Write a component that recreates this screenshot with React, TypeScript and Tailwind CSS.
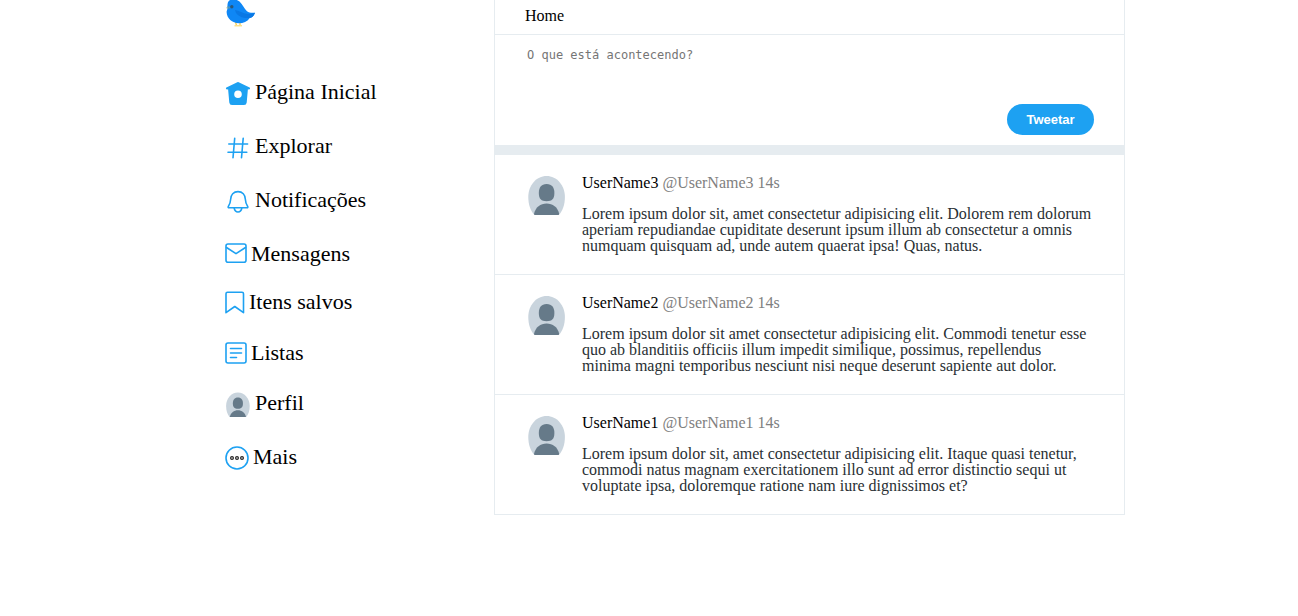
import type { ReactNode } from "react";

const line = {
  fill: "none",
  stroke: "#1da1f2",
  strokeWidth: 1.6,
  strokeLinecap: "round" as const,
  strokeLinejoin: "round" as const,
};

function BirdLogo() {
  return (
    <svg viewBox="0 0 32 28" className="h-7 w-8" aria-hidden="true">
      <path d="M10.500 22 L11.500 25.500 M15 22.500 L15 25.500" stroke="#f6c945" strokeWidth="1.200" fill="none" />
      <path d="M9.500 25.700 H17" stroke="#fbe08a" strokeWidth="1.500" fill="none" />
      <path d="M0.800 8 L3.500 5.500 L4.500 9.500 Z" fill="#d9d6a0" />
      <path
        d="M5 0 C8.500 -1.200 12 -0.500 14.500 1.500 C17.800 4.500 19 8.500 22 11.300 C24 13 27 12.800 30 12.700 C28.800 16 27 17.500 24.800 18 C22 21.800 18.500 23.300 14 23.300 C7 23 1.800 18.500 1.600 12 C1.600 10.500 2.500 9.500 2.600 8 C2.200 4.500 2.500 1.500 5 0 Z"
        fill="#0f87f5"
      />
      <path d="M10 10 C14 10.500 18 13.800 22.500 14 C25 14.100 28 13.500 30 12.700 C28.800 16 27 17.500 24.800 18 C19 18.500 11.500 17 10 10 Z" fill="#0a78e4" />
      <path d="M2.700 5.800 L6 7.500 L3.200 9.300 Z" fill="#4d93b8" />
      <circle cx="6.800" cy="6.800" r="1.700" fill="#2c5878" />
    </svg>
  );
}

function HomeIcon() {
  return (
    <svg viewBox="0 0 26 28" className="h-7 w-[26px] shrink-0" aria-hidden="true">
      <path
        fillRule="evenodd"
        fill="#1da1f2"
        d="M12.300 4.200 Q13 3.800 13.700 4.200 L24.600 9.400 Q25.300 9.900 25 10.800 Q24.600 11.500 23.800 11.400 L22.900 11.300 L21.700 24.500 Q21.400 27 19 27 H7 Q4.600 27 4.300 24.500 L3.100 11.300 L2.200 11.400 Q1.400 11.500 1 10.800 Q0.700 9.900 1.400 9.400 Z M13 12.400 a3.800 3.800 0 1 0 0 7.600 a3.800 3.800 0 1 0 0 -7.600 Z"
      />
    </svg>
  );
}

function HashIcon() {
  return (
    <svg viewBox="0 0 26 28" className="h-7 w-[26px] shrink-0" aria-hidden="true">
      <path {...line} d="M9.700 6.300 L8 25.700 M18.200 6.300 L16.500 25.700 M3.800 12 H22.600 M3 20.300 H21.800" />
    </svg>
  );
}

function BellIcon() {
  return (
    <svg viewBox="0 0 26 28" className="h-7 w-[26px] shrink-0" aria-hidden="true">
      <path {...line} d="M13 5.600 C8.500 5.600 5.900 9 5.700 13 C5.500 17 4.800 18.500 3.200 20.700 Q2.900 21.800 4 21.800 H22 Q23.100 21.800 22.800 20.700 C21.200 18.500 20.500 17 20.300 13 C20.100 9 17.500 5.600 13 5.600 Z" />
      <path {...line} d="M9.200 22.200 C9.600 24.700 11 26 13 26 C15 26 16.400 24.700 16.800 22.200" />
    </svg>
  );
}

function MailIcon() {
  return (
    <svg viewBox="0 0 22 28" className="h-7 w-[22px] shrink-0" aria-hidden="true">
      <rect {...line} x="1" y="4" width="20" height="18.200" rx="2" />
      <path {...line} d="M1.500 7.500 L11 13.700 L20.500 7.500" />
    </svg>
  );
}

function BookmarkIcon() {
  return (
    <svg viewBox="0 0 20 28" className="h-7 w-5 shrink-0" aria-hidden="true">
      <path {...line} d="M2.500 4.300 H17 Q18.500 4.300 18.500 5.800 V24.700 L9.800 18.500 L1 24.700 V5.800 Q1 4.300 2.500 4.300 Z" />
    </svg>
  );
}

function ListIcon() {
  return (
    <svg viewBox="0 0 22 28" className="h-7 w-[22px] shrink-0" aria-hidden="true">
      <rect {...line} x="1" y="4" width="20" height="20" rx="2" />
      <path {...line} d="M5.500 9.500 H16.500 M5.500 14 H16.500 M5.500 18.500 H11.500" />
    </svg>
  );
}

function MoreIcon() {
  return (
    <svg viewBox="0 0 24 28" className="h-7 w-6 shrink-0" aria-hidden="true">
      <circle cx="12" cy="15" r="11" fill="none" stroke="#1da1f2" strokeWidth="1.600" />
      <g fill="none" stroke="#222222" strokeWidth="1.200">
        <circle cx="7" cy="15" r="1.400" />
        <circle cx="12" cy="15" r="1.400" />
        <circle cx="17" cy="15" r="1.400" />
      </g>
    </svg>
  );
}

function Person() {
  return (
    <>
      <path d="M6.500 40 C2.500 36 0.300 29.500 0.300 22 C0.300 10.500 8.300 1 18.600 1 S36.900 10.500 36.900 22 C36.900 29.500 34.700 36 30.700 40 Z" fill="#c9d4dd" />
      <path d="M18.600 9 C24 9 26.400 12.800 26.400 18 C26.400 23.800 24 26.200 18.600 26.200 S10.800 23.800 10.800 18 C10.800 12.800 13.200 9 18.600 9 Z" fill="#667a89" />
      <path d="M6 39 C7.500 32 12.500 28.500 18.600 28.500 S29.700 32 31.200 39 Q31.200 40 30.200 40 H7 Q6 40 6 39 Z" fill="#667a89" />
    </>
  );
}

function ProfileIcon() {
  return (
    <svg viewBox="0 0 26 28" className="h-7 w-[26px] shrink-0" aria-hidden="true">
      <g transform="translate(0.900 2.800) scale(0.645)">
        <Person />
      </g>
    </svg>
  );
}

type NavEntry = { label: string; icon: ReactNode; height: string };

const entries: NavEntry[] = [
  { label: "Página Inicial", icon: <HomeIcon />, height: "h-[54px]" },
  { label: "Explorar", icon: <HashIcon />, height: "h-[54px]" },
  { label: "Notificações", icon: <BellIcon />, height: "h-[54px]" },
  { label: "Mensagens", icon: <MailIcon />, height: "h-12" },
  { label: "Itens salvos", icon: <BookmarkIcon />, height: "h-[51px]" },
  { label: "Listas", icon: <ListIcon />, height: "h-[50px]" },
  { label: "Perfil", icon: <ProfileIcon />, height: "h-[54px]" },
  { label: "Mais", icon: <MoreIcon />, height: "h-[54px]" },
];

const tweets = [
  {
    name: "UserName3",
    text: "Lorem ipsum dolor sit, amet consectetur adipisicing elit. Dolorem rem dolorum aperiam repudiandae cupiditate deserunt ipsum illum ab consectetur a omnis numquam quisquam ad, unde autem quaerat ipsa! Quas, natus.",
  },
  {
    name: "UserName2",
    text: "Lorem ipsum dolor sit amet consectetur adipisicing elit. Commodi tenetur esse quo ab blanditiis officiis illum impedit similique, possimus, repellendus minima magni temporibus nesciunt nisi neque deserunt sapiente aut dolor.",
  },
  {
    name: "UserName1",
    text: "Lorem ipsum dolor sit, amet consectetur adipisicing elit. Itaque quasi tenetur, commodi natus magnam exercitationem illo sunt ad error distinctio sequi ut voluptate ipsa, doloremque ratione nam iure dignissimos et?",
  },
];

export default function App() {
  return (
    <div className="flex min-h-screen items-start justify-center bg-white pl-[52px] font-['Liberation_Serif',serif] text-black">
      <div className="flex w-full max-w-[900px] items-start">
        <aside className="w-[269px] shrink-0">
          <a href="#" aria-label="Twitter" className="mb-[50px] block w-8">
            <BirdLogo />
          </a>
          <nav>
            <ul>
              {entries.map((entry) => (
                <li key={entry.label} className={entry.height}>
                  <a href="#" className="inline-flex gap-1 text-[22px] leading-7">
                    {entry.icon}
                    {entry.label}
                  </a>
                </li>
              ))}
            </ul>
          </nav>
        </aside>

        <main className="min-w-0 flex-1 border-x border-[#e6ecf0]">
          <h1 className="border-b border-[#e6ecf0] px-[30px] pt-1.5 pb-2 text-base leading-5">Home</h1>
          <form className="flex flex-col items-end border-b-10 border-[#e6ecf0] px-[30px] pt-3 pb-2.5">
            <textarea
              aria-label="O que está acontecendo?"
              placeholder="O que está acontecendo?"
              className="h-[57px] w-full resize-none px-0.5 font-['DejaVu_Sans_Mono',monospace] text-xs leading-4 outline-none placeholder:text-[#757575]"
            />
            <button
              type="button"
              className="h-[31px] w-[87px] rounded-full bg-[#1da1f2] font-['Liberation_Sans',sans-serif] text-[13px] font-bold text-white"
            >
              Tweetar
            </button>
          </form>
          {tweets.map((tweet) => (
            <article key={tweet.name} className="flex gap-4 border-b border-[#e6ecf0] pt-5 pr-[30px] pb-5 pl-[33px]">
              <svg viewBox="0 0 38 40" className="h-10 w-[38px] shrink-0" role="img" aria-label={tweet.name}>
                <Person />
              </svg>
              <div className="min-w-0 flex-1">
                <h2 className="mb-[15px] text-base leading-4">
                  {tweet.name} <span className="text-[#808080]">@{tweet.name} 14s</span>
                </h2>
                <p className="text-base leading-4 text-[#292f33]">{tweet.text}</p>
              </div>
            </article>
          ))}
        </main>
      </div>
    </div>
  );
}
